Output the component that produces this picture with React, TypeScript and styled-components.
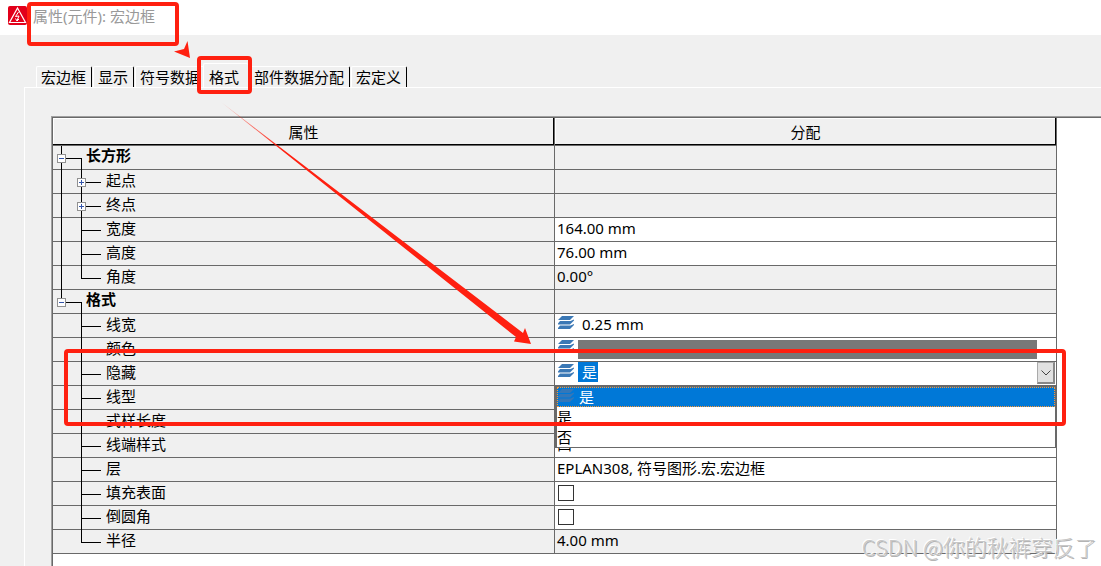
import React from 'react';
import styled, { createGlobalStyle, css } from 'styled-components';

const line = '#696969';
const red = '#ff2010';

const GlobalStyle = createGlobalStyle`
  * { box-sizing: border-box; }
  html, body, #root { height: 100%; }
  body {
    margin: 0;
    overflow: hidden;
    background: #f0f0f0;
    color: #000;
    font: 15px/20px "Noto Sans", "Noto Sans CJK SC", sans-serif;
  }
`;

const Window = styled.main`
  position: relative;
  display: flex;
  flex-direction: column;
  height: 100%;
  overflow: hidden;
`;

const TitleBar = styled.header`
  display: flex;
  align-items: flex-start;
  gap: 6px;
  height: 35px;
  padding: 6px 8px;
  background: #fff;
  color: #999;
`;

const Title = styled.h1`
  margin: 0;
  font-size: 15px;
  font-weight: 400;
  line-height: 20px;
`;

const Tabs = styled.nav`
  display: flex;
  align-items: flex-end;
  height: 52px;
  padding: 0 35px;
`;

const Tab = styled.button<{ $active?: boolean }>`
  height: 21px;
  padding: 0 5px 0 4px;
  border: 0;
  border-top: 1px solid #fff;
  border-left: 1px solid #fff;
  border-right: 1px solid #000;
  border-radius: 2px 2px 0 0;
  background: #f0f0f0;
  color: inherit;
  font: inherit;
  line-height: 20px;
  white-space: nowrap;
  margin-left: 1px;
  ${p => p.$active && css`
    z-index: 1;
    height: 24px;
    margin-left: -3px;
    padding: 2px 9px 0 5px;
    border-right: 0;
  `}
`;

const Panel = styled.section`
  flex: 1;
  min-height: 0;
  margin-left: 24px;
  padding: 28px 0 0 26px;
  border-top: 1px solid #fff;
  border-left: 1px solid #fff;
`;

const Sheet = styled.div`
  height: 100%;
  padding: 1px 44px 0 1px;
  border: solid #a0a0a0;
  border-width: 1px 0 0 1px;
  background: #fff;
  box-shadow: inset 1px 1px 0 ${line};
`;

const Grid = styled.table`
  width: 100%;
  table-layout: fixed;
  border-collapse: separate;
  border-spacing: 0;
`;

const HeadCell = styled.th`
  height: 28px;
  padding: 0;
  border-right: 1px solid ${line};
  border-bottom: 1px solid ${line};
  background: #f0f0f0;
  box-shadow: inset -1px -1px 0 #000, inset 1px 1px 0 #fff;
  font-weight: 400;
`;

const NameCell = styled.td`
  height: 24px;
  padding: 0;
  border-right: 1px solid ${line};
  border-bottom: 1px solid ${line};
  background: #f0f0f0;
`;

const NameInner = styled.div<{ $group?: boolean }>`
  display: flex;
  height: 23px;
  font-weight: ${p => (p.$group ? 700 : 400)};
  line-height: ${p => (p.$group ? 18 : 20)}px;
`;

const TreeSvg = styled.svg`
  flex: none;
  display: block;
  overflow: visible;
`;

const ValueCell = styled.td<{ $white?: boolean }>`
  height: 24px;
  padding: 0 0 0 2px;
  border-right: 1px solid ${line};
  border-bottom: 1px solid ${line};
  background: ${p => (p.$white ? '#fff' : '#f0f0f0')};
`;

const ValueInner = styled.div`
  position: relative;
  display: flex;
  align-items: flex-start;
  height: 23px;
`;

const LayerSlot = styled.span`
  flex: none;
  width: 22px;
  height: 20px;
  padding-top: 1px;
`;

const Text = styled.span<{ $indent?: boolean }>`
  padding-left: ${p => (p.$indent ? 3 : 0)}px;
  line-height: 21px;
  white-space: nowrap;
`;

const ColorBar = styled.span`
  flex: 1;
  height: 19px;
  margin: 2px 19px 0 -1px;
  background: #787878;
`;

const Tick = styled.input`
  appearance: none;
  width: 16px;
  height: 16px;
  margin: 3px 1px;
  border: 1px solid #333;
  background: #fff;
`;

const Combo = styled.button`
  display: flex;
  flex: 1;
  justify-content: space-between;
  height: 23px;
  margin-left: -1px;
  padding: 0 1px 0 0;
  border: 0;
  background: #fff;
  color: #fff;
  font: inherit;
  line-height: 20px;
`;

const Selected = styled.span`
  height: 20px;
  padding: 0 1px 0 4px;
  background: #0078d7;
`;

const DropMark = styled.span`
  display: grid;
  place-items: center;
  width: 18px;
  height: 22px;
  border: 1px solid #aaa;
  border-right: 2px solid #888;
  border-bottom: 2px solid #888;
  background: #e1e1e1;
`;

const Options = styled.ul`
  position: absolute;
  z-index: 2;
  top: 23px;
  left: -2px;
  right: 0;
  margin: 0;
  padding: 0;
  border: 1px solid ${line};
  border-top-width: 2px;
  border-left-width: 2px;
  background: #fff;
  list-style: none;
`;

const Option = styled.li<{ $current?: boolean }>`
  display: flex;
  height: 20px;
  line-height: 20px;
  ${p => p.$current && css`
    outline: 1px dotted #f93;
    outline-offset: -1px;
    background: #0078d7;
    color: #fff;
  `}
`;

const Frame = styled.div`
  position: absolute;
  z-index: 4;
  border: 4px solid ${red};
  border-radius: 4px;
  pointer-events: none;
`;

const TitleFrame = styled(Frame)`
  top: 2px;
  left: 27px;
  width: 152px;
  height: 44px;
`;

const TabFrame = styled(Frame)`
  top: 56px;
  left: 197px;
  width: 55px;
  height: 38px;
`;

const RowsFrame = styled(Frame)`
  top: 349px;
  left: 64px;
  right: 35px;
  height: 77px;
`;

const Arrows = styled.svg`
  position: absolute;
  z-index: 4;
  top: 0;
  left: 0;
  pointer-events: none;
`;

const Watermark = styled.div`
  position: absolute;
  z-index: 5;
  right: 4px;
  bottom: 6px;
  color: #c8c8c8;
  font: 300 22px/28px "Noto Sans CJK SC", sans-serif;
  text-shadow: -1px -1px 0 #fff, 1px 1px 0 #b4b4b4;
  white-space: nowrap;
`;

type Kind = 'text' | 'layer' | 'color' | 'combo' | 'tick';
interface Row {
  name: string;
  group?: boolean;
  box?: boolean;
  last?: boolean;
  outer?: boolean;
  value?: string;
  white?: boolean;
  kind?: Kind;
}

const rows: Row[] = [
  { name: '长方形', group: true, outer: true },
  { name: '起点', box: true, outer: true },
  { name: '终点', box: true, outer: true },
  { name: '宽度', outer: true, value: '164.00 mm', white: true },
  { name: '高度', outer: true, value: '76.00 mm', white: true },
  { name: '角度', outer: true, last: true, value: '0.00°' },
  { name: '格式', group: true },
  { name: '线宽', value: '0.25 mm', white: true, kind: 'layer' },
  { name: '颜色', white: true, kind: 'color' },
  { name: '隐藏', value: '是', white: true, kind: 'combo' },
  { name: '线型', white: true },
  { name: '式样长度', white: true },
  { name: '线端样式', value: '凹', white: true },
  { name: '层', value: 'EPLAN308, 符号图形.宏.宏边框', white: true },
  { name: '填充表面', white: true, kind: 'tick' },
  { name: '倒圆角', white: true, kind: 'tick' },
  { name: '半径', value: '4.00 mm', last: true },
];

function Expander({ x, plus }: { x: number; plus?: boolean }) {
  return (
    <g shapeRendering="crispEdges">
      <rect x={x - 4 + 0.5} y={8.5} width={8} height={8} rx={1} fill="#fff" stroke="#919191" />
      <path d={`M${x - 2} 12.5h5${plus ? `M${x + 0.5} 10v5` : ''}`} stroke="#3355aa" />
    </g>
  );
}

function Tree({ row }: { row: Row }) {
  const width = row.group ? 33 : 53;
  return (
    <TreeSvg width={width} height={24} fill="none" aria-hidden="true">
      <g stroke="#000" shapeRendering="crispEdges">
        {row.outer && <path d="M8.5 0V24" />}
        {row.group && !row.outer && <path d="M8.5 0V12" />}
        {row.group ? <path d="M9 12.5H28.5V24" /> : <path d={`M28.5 0V${row.last ? 13 : 24}M28 12.5H48`} />}
      </g>
      {row.group && <Expander x={8} />}
      {row.box && <Expander x={28} plus />}
    </TreeSvg>
  );
}

function LayerIcon({ dim }: { dim?: boolean }) {
  return (
    <LayerSlot>
      <svg width="18" height="18" viewBox="0 0 18 18" fill={dim ? '#3477b8' : '#3b78b5'} aria-hidden="true">
        <path d="M5 1H17L13 5H1Z" />
        <path d="M3 6H13.500L17 4.500V5.500L13 9.500H1V8.500Z" />
        <path d="M3 10.500H13.500L17 9V10L13 14H1V13Z" />
      </svg>
    </LayerSlot>
  );
}

function Value({ row }: { row: Row }) {
  switch (row.kind) {
    case 'layer':
      return <><LayerIcon /><Text $indent>{row.value}</Text></>;
    case 'color':
      return <><LayerIcon /><ColorBar /></>;
    case 'tick':
      return <Tick type="checkbox" aria-label={row.name} />;
    case 'combo':
      return (
        <>
          <LayerIcon />
          <Combo type="button" aria-label={row.name} aria-haspopup="listbox" aria-expanded="true">
            <Selected>{row.value}</Selected>
            <DropMark>
              <svg width="10" height="6" viewBox="0 0 10 6" fill="none" stroke="#444" aria-hidden="true">
                <path d="M0.500 0.500L5 5L9.500 0.500" />
              </svg>
            </DropMark>
          </Combo>
          <Options role="listbox">
            <Option role="option" aria-selected="true" $current><LayerIcon dim />是</Option>
            <Option role="option">是</Option>
            <Option role="option">否</Option>
          </Options>
        </>
      );
    default:
      return <Text>{row.value}</Text>;
  }
}

export default function App() {
  return (
    <Window>
      <GlobalStyle />
      <TitleBar>
        <svg width="19" height="19" viewBox="0 0 19 19" fill="none" aria-hidden="true">
          <rect width="19" height="19" rx="2" fill="#e2001a" />
          <path d="M9.500 2L17.500 16.500H1.500Z" stroke="#fff" strokeWidth="1.200" />
          <path d="M10.500 6L7.500 10.500L11 10L9 14.500M7.500 12.500L9 15L11 13" stroke="#fff" />
        </svg>
        <Title>属性(元件): 宏边框</Title>
      </TitleBar>
      <Tabs>
        <Tab type="button">宏边框</Tab>
        <Tab type="button">显示</Tab>
        <Tab type="button">符号数据</Tab>
        <Tab type="button" $active>格式</Tab>
        <Tab type="button">部件数据分配</Tab>
        <Tab type="button">宏定义</Tab>
      </Tabs>
      <Panel>
        <Sheet>
          <Grid>
            <thead>
              <tr><HeadCell>属性</HeadCell><HeadCell>分配</HeadCell></tr>
            </thead>
            <tbody>
              {rows.map(row => (
                <tr key={row.name}>
                  <NameCell>
                    <NameInner $group={row.group}><Tree row={row} />{row.name}</NameInner>
                  </NameCell>
                  <ValueCell $white={row.white}>
                    <ValueInner><Value row={row} /></ValueInner>
                  </ValueCell>
                </tr>
              ))}
            </tbody>
          </Grid>
        </Sheet>
      </Panel>
      <TitleFrame />
      <TabFrame />
      <RowsFrame />
      <Arrows width="560" height="360" aria-hidden="true">
        <defs>
          <linearGradient id="fade" gradientUnits="userSpaceOnUse" x1="220" y1="101" x2="285" y2="150">
            <stop offset="0" stopColor={red} stopOpacity="0.2" />
            <stop offset="1" stopColor={red} />
          </linearGradient>
        </defs>
        <path d="M187.500 41L190 58L174 51.500L184 49Z" fill={red} />
        <path d="M221 102L523 333L525 328L531 344L514 341.500L516 337Z" fill="url(#fade)" />
      </Arrows>
      <Watermark>CSDN @你的秋裤穿反了</Watermark>
    </Window>
  );
}
